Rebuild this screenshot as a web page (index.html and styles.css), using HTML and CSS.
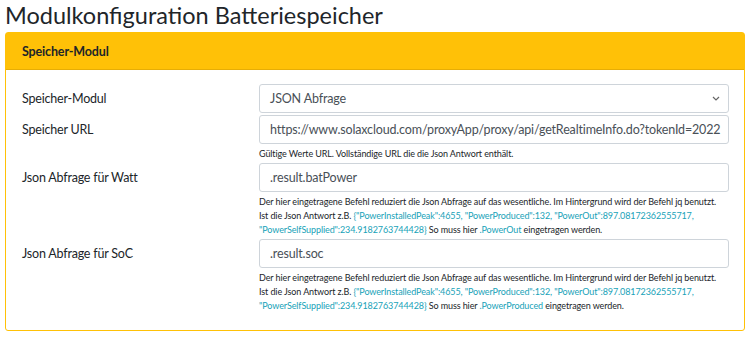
FILE: index.html
```html
<!DOCTYPE html>
<html lang="de">
<head>
  <meta charset="UTF-8" />
  <meta name="viewport" content="width=device-width, initial-scale=1.0" />
  <title>Modulkonfiguration Batteriespeicher</title>
  <link rel="stylesheet" href="styles.css">
</head>
<body>

  <h1 class="page-title">Modulkonfiguration Batteriespeicher</h1>

  <!-- SPEICHER-MODUL -->
  <div class="card">
    <div class="card-header">Speicher-Modul</div>
    <div class="card-body">

      <div class="form-row">
        <label class="form-label">Speicher-Modul</label>
        <div class="form-field">
          <div class="select-box">
            <span>JSON Abfrage</span>
            <svg class="chevron" width="8" height="5" viewBox="0 0 8 5"><path d="M1 1l3 3 3-3" fill="none" stroke="#666" stroke-width="1.2"/></svg>
          </div>
        </div>
      </div>

      <div class="form-row">
        <label class="form-label">Speicher URL</label>
        <div class="form-field">
          <div class="input-box">https://www.solaxcloud.com/proxyApp/proxy/api/getRealtimeInfo.do?tokenId=2022</div>
          <div class="help">Gültige Werte URL. Vollständige URL die die Json Antwort enthält.</div>
        </div>
      </div>

      <div class="form-row">
        <label class="form-label">Json Abfrage für Watt</label>
        <div class="form-field">
          <div class="input-box">.result.batPower</div>
          <div class="help">
            Der hier eingetragene Befehl reduziert die Json Abfrage auf das wesentliche. Im Hintergrund wird der Befehl jq benutzt.<br>
            Ist die Json Antwort z.B. <span class="code">{"PowerInstalledPeak":4655, "PowerProduced":132, "PowerOut":897.08172362555717, "PowerSelfSupplied":234.9182763744428}</span> So muss hier <span class="code">.PowerOut</span> eingetragen werden.
          </div>
        </div>
      </div>

      <div class="form-row">
        <label class="form-label">Json Abfrage für SoC</label>
        <div class="form-field">
          <div class="input-box">.result.soc</div>
          <div class="help">
            Der hier eingetragene Befehl reduziert die Json Abfrage auf das wesentliche. Im Hintergrund wird der Befehl jq benutzt.<br>
            Ist die Json Antwort z.B. <span class="code">{"PowerInstalledPeak":4655, "PowerProduced":132, "PowerOut":897.08172362555717, "PowerSelfSupplied":234.9182763744428}</span> So muss hier <span class="code">.PowerProduced</span> eingetragen werden.
          </div>
        </div>
      </div>

    </div>
  </div>

</body>
</html>
```

FILE: styles.css
```css
* {
  box-sizing: border-box;
  margin: 0;
  padding: 0;
}

body {
  font-family: 'Lato', 'Open Sans', sans-serif;
  color: #212529;
  background: #fff;
  padding: 0 7px 0 5px;
}

.page-title {
  font-size: 23.5px;
  font-weight: 400;
  line-height: 30px;
  height: 32px;
}

/* --- CARD --- */
.card {
  border: 1px solid #ffc107;
  border-radius: 3px;
}

.card-header {
  background: #ffc107;
  border-bottom: 1px solid #e6ad06;
  height: 37px;
  padding: 0 16px;
  display: flex;
  align-items: center;
  font-size: 12.5px;
  font-weight: 700;
  letter-spacing: -0.15px;
}

.card-body {
  padding: 14px 15px 17px 16px;
  display: flex;
  flex-direction: column;
  gap: 2px;
}

.form-row {
  display: grid;
  grid-template-columns: 237px minmax(0, 1fr);
}

.form-label {
  font-size: 12.5px;
  letter-spacing: -0.2px;
  height: 29px;
  display: flex;
  align-items: center;
}

.select-box,
.input-box {
  height: 29px;
  border: 1px solid #ced4da;
  border-radius: 3px;
  padding: 0 10px;
  color: #495057;
  font-size: 12.5px;
  letter-spacing: -0.15px;
  display: flex;
  align-items: center;
  white-space: nowrap;
  overflow: hidden;
}

.select-box {
  justify-content: space-between;
  padding-right: 8px;
}

.chevron {
  flex-shrink: 0;
}

.help {
  font-size: 9px;
  letter-spacing: -0.1px;
  line-height: 14px;
  padding-top: 3px;
}

.code {
  color: #17a2b8;
}
```
